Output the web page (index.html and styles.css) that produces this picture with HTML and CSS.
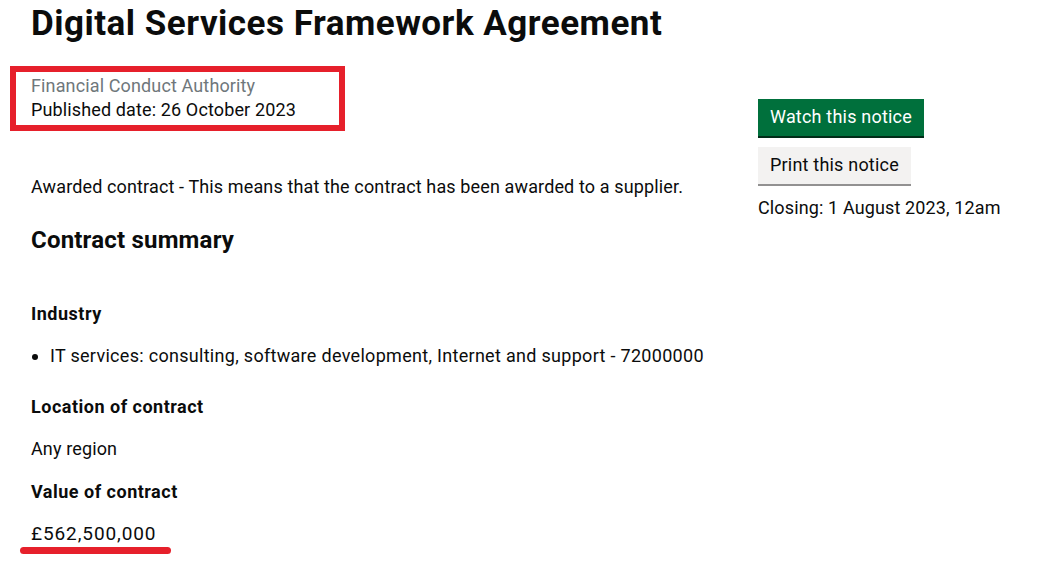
FILE: index.html
```html
<!DOCTYPE html>
<html lang="en">
<head>
<meta charset="utf-8">
<title>Digital Services Framework Agreement</title>
<link rel="stylesheet" href="styles.css">
</head>
<body>
<main class="page">
  <h1 class="title">Digital Services Framework Agreement</h1>
  <div class="layout">
    <div class="main-col">
      <div class="meta-wrap">
        <div class="meta">
          <p class="org">Financial Conduct Authority</p>
          <p class="published">Published date: 26 October 2023</p>
        </div>
      </div>
      <p class="status">Awarded contract - This means that the contract has been awarded to a supplier.</p>
      <h2 class="section">Contract summary</h2>
      <h3 class="label label-first">Industry</h3>
      <ul class="list">
        <li>IT services: consulting, software development, Internet and support - 72000000</li>
      </ul>
      <h3 class="label label-after-list">Location of contract</h3>
      <p class="value">Any region</p>
      <h3 class="label">Value of contract</h3>
      <p class="value money">£562,500,000</p>
      <div class="mark"></div>
    </div>
    <aside class="side">
      <button class="btn btn-green">Watch this notice</button>
      <button class="btn btn-grey">Print this notice</button>
      <p class="closing">Closing: 1 August 2023, 12am</p>
    </aside>
  </div>
</main>
</body>
</html>
```
FILE: styles.css
```css
* { box-sizing: border-box; }
html, body { margin: 0; padding: 0; background: #ffffff; }
body {
  font-family: Roboto, "Liberation Sans", Arial, sans-serif;
  color: #0b0c0c;
  font-size: 18px;
  letter-spacing: 0.13px;
}
.page { padding: 0 0 0 31px; }
.title {
  margin: 0;
  padding-top: 4px;
  font-size: 35px;
  line-height: 40px;
  font-weight: 700;
  letter-spacing: 0.5px;
}
.layout {
  display: flex;
  align-items: flex-start;
}
.main-col { width: 727px; }
.meta-wrap {
  margin: 22px 0 0 -21px;
  width: 335px;
  border: 6px solid #e6202b;
  padding: 2px 0 3px 15px;
}
.meta p { margin: 0; line-height: 24px; font-size: 18px; }
.org { color: #6f777b; }
.status { margin: 44px 0 0; line-height: 24px; }
.section {
  margin: 26px 0 0;
  font-size: 24px;
  line-height: 30px;
  font-weight: 700;
  letter-spacing: 0.2px;
}
.label {
  margin: 19px 0 0;
  font-size: 18px;
  line-height: 24px;
  font-weight: 700;
  letter-spacing: 0.5px;
}
.label-first { margin-top: 47px; }
.label-after-list { margin-top: 27px; }
.list { margin: 18px 0 0; padding-left: 19px; line-height: 24px; }
.list li { padding-left: 0; letter-spacing: 0.3px; }
.value { margin: 18px 0 0; line-height: 24px; }
.money { font-size: 19px; letter-spacing: 0.9px; }
.mark {
  margin: 1px 0 0 -11px;
  width: 151px;
  height: 7px;
  border-radius: 4px;
  background: #e6202b;
}
.side {
  display: flex;
  flex-direction: column;
  align-items: flex-start;
  padding-top: 55px;
}
.btn {
  font-family: inherit;
  font-size: 18px;
  line-height: 24px;
  letter-spacing: 0.2px;
  border: 0;
  padding: 6px 12px 7px;
  cursor: pointer;
}
.btn-green {
  background: #00703c;
  color: #ffffff;
  box-shadow: 0 2px 0 #002d18;
}
.btn-grey {
  margin-top: 11px;
  background: #f3f2f1;
  color: #0b0c0c;
  box-shadow: 0 2px 0 #929191;
}
.closing { margin: 12px 0 0; line-height: 24px; }
```
